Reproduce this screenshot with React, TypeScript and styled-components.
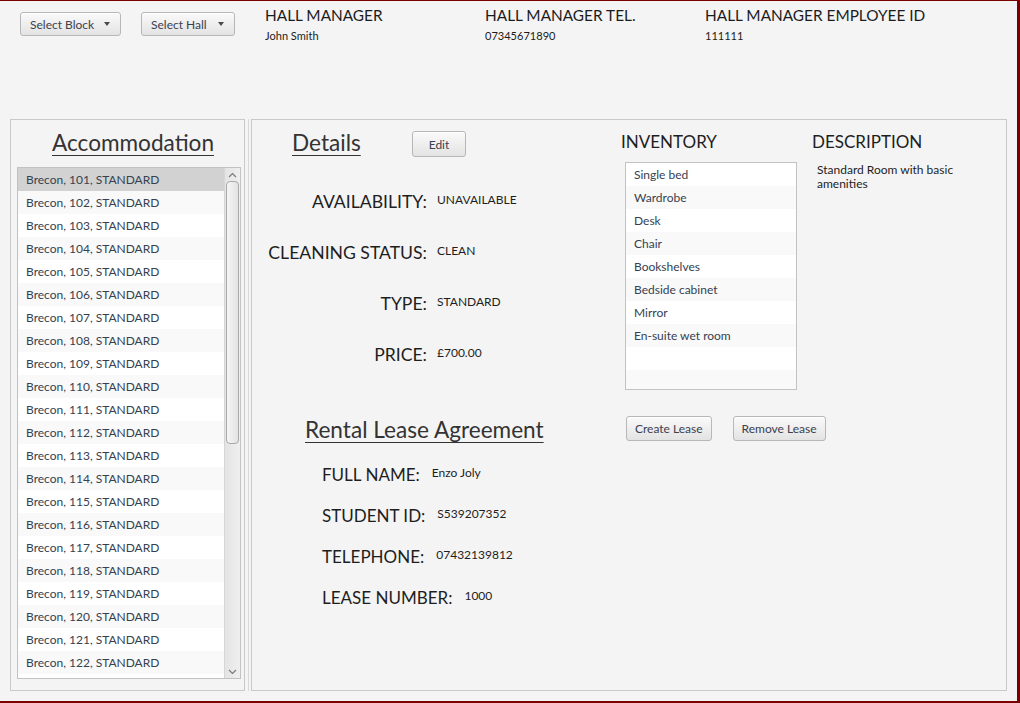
import React from 'react';
import styled, { createGlobalStyle } from 'styled-components';

const GlobalStyle = createGlobalStyle`
  html, body {
    margin: 0;
    padding: 0;
    background: #f4f4f4;
  }
  body {
    font-family: Lato, 'Open Sans', sans-serif;
    color: #333;
  }
  * {
    box-sizing: border-box;
  }
`;

const Window = styled.div`
  width: 1020px;
  height: 703px;
  background: #f4f4f4;
  border-top: 1px solid #7a0000;
  border-right: 3px solid #7a0000;
  border-bottom: 2px solid #7a0000;
  display: flex;
  flex-direction: column;
  overflow: hidden;
`;

const TopBar = styled.div`
  display: flex;
  align-items: flex-start;
  height: 118px;
  padding: 4px 0 0 20px;
`;

const ComboGroup = styled.div`
  display: flex;
  gap: 20px;
  margin-top: 7px;
`;

const ComboButton = styled.button<{ $width: number }>`
  width: ${(p) => p.$width}px;
  height: 24px;
  display: flex;
  align-items: center;
  justify-content: space-between;
  padding: 0 10px 0 9px;
  border: 1px solid #b7b7b7;
  border-radius: 3px;
  background: linear-gradient(to bottom, #fafafa, #e3e3e3);
  box-shadow: inset 0 1px 0 #ffffff;
  font-family: Lato, sans-serif;
  font-size: 12px;
  color: #3a4150;
`;

const Arrow = styled.span`
  width: 0;
  height: 0;
  border-left: 3.5px solid transparent;
  border-right: 3.5px solid transparent;
  border-top: 4.5px solid #4a4a4a;
`;

const InfoRow = styled.div`
  display: flex;
  margin-left: 30px;
`;

const InfoBlock = styled.div`
  width: 220px;
  display: flex;
  flex-direction: column;
`;

const InfoLabel = styled.div`
  font-size: 16px;
  line-height: 19px;
  color: #1c1c1c;
  white-space: nowrap;
  transform: scaleX(0.96);
  transform-origin: left center;
`;

const InfoValue = styled.div`
  margin-top: 5px;
  font-size: 12px;
  line-height: 14px;
  color: #1c1c1c;
  transform: scaleX(0.92);
  transform-origin: left center;
`;

const Main = styled.div`
  flex: 1;
  display: flex;
  padding: 0 10px 10px 10px;
`;

const SidePanel = styled.div`
  width: 235px;
  border: 1px solid #c9c9c9;
  display: flex;
  flex-direction: column;
  padding: 10px 3px 0 6px;
`;

const Divider = styled.div`
  width: 6px;
  display: flex;
  justify-content: center;
  &::after {
    content: '';
    width: 1px;
    background: #d9d9d9;
  }
`;

const ContentPanel = styled.div`
  flex: 1;
  border: 1px solid #c9c9c9;
  display: flex;
`;

const Title = styled.div`
  font-size: 22.6px;
  line-height: 26px;
  color: #333;
  & span {
    text-decoration: underline;
    text-decoration-thickness: 1px;
    text-underline-offset: 4px;
  }
`;

const SideTitle = styled(Title)`
  text-align: center;
  padding-left: 8px;
  margin-bottom: 11px;
`;

const ListBox = styled.div<{ $width: number; $height: number }>`
  width: ${(p) => p.$width}px;
  height: ${(p) => p.$height}px;
  border: 1px solid #c2c2c2;
  background: #fff;
  display: flex;
  overflow: hidden;
`;

const Rows = styled.div`
  flex: 1;
  display: flex;
  flex-direction: column;
`;

const Row = styled.div<{ $odd: boolean; $selected?: boolean }>`
  flex: none;
  height: 23px;
  line-height: 23px;
  padding-left: 8px;
  font-size: 12px;
  color: #364150;
  white-space: nowrap;
  background: ${(p) => (p.$selected ? '#d2d2d2' : p.$odd ? '#f9f9f9' : '#ffffff')};
`;

const ScrollBar = styled.div`
  width: 16px;
  display: flex;
  flex-direction: column;
  background: linear-gradient(to right, #e4e4e4, #efefef);
  border-left: 1px solid #d6d6d6;
`;

const ScrollArrow = styled.div`
  height: 13px;
  display: flex;
  align-items: center;
  justify-content: center;
`;

const Thumb = styled.div<{ $height: number }>`
  height: ${(p) => p.$height}px;
  margin: 0 1px 0 1px;
  border: 1px solid #a9a9a9;
  border-radius: 4px;
  background: linear-gradient(to right, #f5f5f5, #e2e2e2);
`;

const Fill = styled.div`
  flex: 1;
`;

const DetailsCol = styled.div`
  width: 369px;
  padding: 10px 0 0 10px;
  display: flex;
  flex-direction: column;
`;

const TitleRow = styled.div`
  display: grid;
  grid-template-columns: 120px auto;
  align-items: start;
  padding-left: 30px;
  margin-bottom: 35px;
`;

const PushButton = styled.button<{ $width?: number }>`
  ${(p) => (p.$width ? `width: ${p.$width}px;` : '')}
  height: ${(p) => (p.$width ? 26 : 25)}px;
  margin-top: ${(p) => (p.$width ? 1 : 0)}px;
  padding: 0 8px;
  border: 1px solid #b7b7b7;
  border-radius: 3px;
  background: linear-gradient(to bottom, #fafafa, #e3e3e3);
  box-shadow: inset 0 1px 0 #ffffff;
  font-family: Lato, sans-serif;
  font-size: 12px;
  color: #3a4150;
`;

const FieldGrid = styled.div`
  display: grid;
  grid-template-columns: 165px auto;
  grid-auto-rows: 51px;
  column-gap: 10px;
  align-items: start;
`;

const FieldLabel = styled.div<{ $right?: boolean; $size?: number }>`
  font-size: ${(p) => p.$size || 17}px;
  line-height: 20px;
  color: #1e1e1e;
  white-space: nowrap;
  text-align: ${(p) => (p.$right ? 'right' : 'left')};
`;

const FieldValue = styled.div`
  margin-top: 1px;
  font-size: 12px;
  line-height: 14px;
  color: #1e1e1e;
  white-space: nowrap;
`;

const LeaseTitle = styled(Title)`
  margin: 21px 0 0 43px;
`;

const LeaseList = styled.div`
  margin: 22px 0 0 60px;
`;

const LeaseRow = styled.div`
  display: flex;
  gap: 12px;
  align-items: flex-start;
  height: 41px;
`;

const SideCol = styled.div`
  display: flex;
  flex-direction: column;
  padding-top: 12px;
`;

const SideTop = styled.div`
  display: flex;
`;

const SideBlock = styled.div<{ $width: number }>`
  width: ${(p) => p.$width}px;
  display: flex;
  flex-direction: column;
`;

const SectionHead = styled.div`
  font-size: 17px;
  line-height: 20px;
  color: #1e1e1e;
  margin-bottom: 10px;
`;

const ListIndent = styled.div`
  padding-left: 4px;
`;

const Description = styled.div`
  width: 170px;
  padding-left: 5px;
  margin-top: 1px;
  font-size: 12px;
  line-height: 14px;
  color: #1e1e1e;
`;

const ButtonRow = styled.div`
  display: flex;
  gap: 21px;
  padding-left: 5px;
  margin-top: 26px;
`;

const Chevron: React.FC<{ up?: boolean }> = ({ up }) => (
  <svg width="9" height="6" viewBox="0 0 9 6">
    <path
      d={up ? 'M1 5 L4.5 1.5 L8 5' : 'M1 1 L4.5 4.5 L8 1'}
      fill="none"
      stroke="#7a7a7a"
      strokeWidth="1.2"
    />
  </svg>
);

const accommodations = Array.from({ length: 23 }, (_, i) =>
  i < 22 ? `Brecon, ${101 + i}, STANDARD` : ''
);

const inventory = [
  'Single bed',
  'Wardrobe',
  'Desk',
  'Chair',
  'Bookshelves',
  'Bedside cabinet',
  'Mirror',
  'En-suite wet room',
  '',
  '',
];

const details = [
  ['AVAILABILITY:', 'UNAVAILABLE'],
  ['CLEANING STATUS:', 'CLEAN'],
  ['TYPE:', 'STANDARD'],
  ['PRICE:', '£700.00'],
];

const lease = [
  ['FULL NAME:', 'Enzo Joly'],
  ['STUDENT ID:', 'S539207352'],
  ['TELEPHONE:', '07432139812'],
  ['LEASE NUMBER:', '1000'],
];

const managerInfo = [
  ['HALL MANAGER', 'John Smith'],
  ['HALL MANAGER TEL.', '07345671890'],
  ['HALL MANAGER EMPLOYEE ID', '111111'],
];

export default function App() {
  return (
    <>
      <GlobalStyle />
      <Window>
        <TopBar>
          <ComboGroup>
            <ComboButton $width={101}>
              Select Block <Arrow />
            </ComboButton>
            <ComboButton $width={94}>
              Select Hall <Arrow />
            </ComboButton>
          </ComboGroup>
          <InfoRow>
            {managerInfo.map(([label, value]) => (
              <InfoBlock key={label}>
                <InfoLabel>{label}</InfoLabel>
                <InfoValue>{value}</InfoValue>
              </InfoBlock>
            ))}
          </InfoRow>
        </TopBar>

        <Main>
          <SidePanel>
            <SideTitle>
              <span>Accommodation</span>
            </SideTitle>
            <ListBox $width={224} $height={512}>
              <Rows>
                {accommodations.map((item, i) => (
                  <Row key={i} $odd={i % 2 === 1} $selected={i === 0}>
                    {item}
                  </Row>
                ))}
              </Rows>
              <ScrollBar>
                <ScrollArrow>
                  <Chevron up />
                </ScrollArrow>
                <Thumb $height={263} />
                <Fill />
                <ScrollArrow>
                  <Chevron />
                </ScrollArrow>
              </ScrollBar>
            </ListBox>
          </SidePanel>

          <Divider />

          <ContentPanel>
            <DetailsCol>
              <TitleRow>
                <Title>
                  <span>Details</span>
                </Title>
                <PushButton $width={54}>Edit</PushButton>
              </TitleRow>

              <FieldGrid>
                {details.map(([label, value]) => (
                  <React.Fragment key={label}>
                    <FieldLabel $right $size={17.6}>
                      {label}
                    </FieldLabel>
                    <FieldValue>{value}</FieldValue>
                  </React.Fragment>
                ))}
              </FieldGrid>

              <LeaseTitle>
                <span>Rental Lease Agreement</span>
              </LeaseTitle>

              <LeaseList>
                {lease.map(([label, value]) => (
                  <LeaseRow key={label}>
                    <FieldLabel>{label}</FieldLabel>
                    <FieldValue>{value}</FieldValue>
                  </LeaseRow>
                ))}
              </LeaseList>
            </DetailsCol>

            <SideCol>
              <SideTop>
                <SideBlock $width={191}>
                  <SectionHead>INVENTORY</SectionHead>
                  <ListIndent>
                    <ListBox $width={172} $height={228}>
                      <Rows>
                        {inventory.map((item, i) => (
                          <Row key={i} $odd={i % 2 === 1}>
                            {item}
                          </Row>
                        ))}
                      </Rows>
                    </ListBox>
                  </ListIndent>
                </SideBlock>
                <SideBlock $width={190}>
                  <SectionHead>DESCRIPTION</SectionHead>
                  <Description>Standard Room with basic amenities</Description>
                </SideBlock>
              </SideTop>
              <ButtonRow>
                <PushButton>Create Lease</PushButton>
                <PushButton>Remove Lease</PushButton>
              </ButtonRow>
            </SideCol>
          </ContentPanel>
        </Main>
      </Window>
    </>
  );
}
